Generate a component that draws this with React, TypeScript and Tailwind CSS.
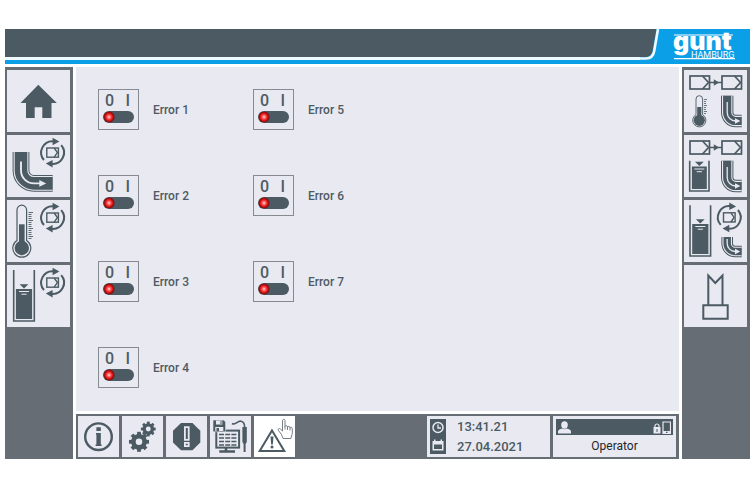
import type { ReactNode } from "react";

const DARK = "#4b5a63";
const LIGHT = "#e9e9f1";

const columns = [
  ["Error 1", "Error 2", "Error 3", "Error 4"],
  ["Error 5", "Error 6", "Error 7"],
];

/* ---------- icon parts, drawn in a 63 x 62 button ---------- */

function Carrier({ x, y, w, h, stroke = 1.7 }: { x: number; y: number; w: number; h: number; stroke?: number }) {
  const right = x + w;
  const notch = w * 0.36;
  return (
    <g fill="none" stroke={DARK} strokeWidth={stroke}>
      <rect x={x} y={y} width={w} height={h} />
      <path d={`M${right - notch} ${y}L${right - 1} ${y + h / 2}L${right - notch} ${y + h}`} />
    </g>
  );
}

function Cycle({ x, y }: { x: number; y: number }) {
  return (
    <g transform={`translate(${x} ${y})`}>
      <path d="M-8.6 7.4A11.3 11.3 0 0 1 1 -11.3M8.6 -7.4A11.3 11.3 0 0 1 -1 11.3" fill="none" stroke={DARK} strokeWidth="2" />
      <path d="M0 -14.8L6.8 -11L0 -7.4ZM0 14.8L-6.8 11L0 7.4Z" fill={DARK} />
      <Carrier x={-5.8} y={-4.6} w={11.6} h={9.2} stroke={1.4} />
    </g>
  );
}

function Pipe({ d, width, arrow, head }: { d: string; width: number; arrow: string; head: string }) {
  return (
    <g fill="none">
      <path d={d} stroke={DARK} strokeWidth={width} />
      <path d={d} stroke={LIGHT} strokeWidth={width - 2} />
      <path d={d} stroke={DARK} strokeWidth={width - 4.2} />
      <path d={arrow} stroke={LIGHT} strokeWidth={width > 14 ? 1.9 : 1.3} />
      <path d={head} fill={LIGHT} />
    </g>
  );
}

function SmallPipe() {
  return (
    <Pipe
      d="M43.2 25.7V42.5A8.5 8.5 0 0 0 51.7 51H57.7"
      width={12.4}
      arrow="M43.2 32V42.5A8.5 8.5 0 0 0 51.7 51"
      head="M51 48.2L56.4 51L51 53.8Z"
    />
  );
}

function Tank({ x, y, w, level }: { x: number; y: number; w: number; level: number }) {
  const mid = x + w / 2;
  return (
    <g>
      <path d={`M${x} ${y}V56H${x + w}V${y}`} fill="none" stroke={DARK} strokeWidth="1.6" />
      <rect x={x + 2.2} y={level} width={w - 4.4} height={54 - level} fill={DARK} />
      <path d={`M${mid - 4.4} ${level - 4.8}H${mid + 4.4}L${mid} ${level - 0.4}Z`} fill={DARK} />
      <path d={`M${mid - 5} ${level + 2.5}H${mid + 5}M${mid - 2.6} ${level + 5.2}H${mid + 2.6}`} stroke={LIGHT} />
    </g>
  );
}

function Transfer() {
  return (
    <g>
      <Carrier x={6} y={6} w={19.5} h={13} />
      <Carrier x={38} y={6} w={19.5} h={13} />
      <path d="M25.5 12.5H38" stroke={DARK} strokeWidth="1.5" />
      <path d="M29.8 9.2L35 12.5L29.8 15.8Z" fill={DARK} />
    </g>
  );
}

const leftNav: { label: string; icon: ReactNode }[] = [
  {
    label: "Home",
    icon: <path d="M31.3 14.8L49.8 33H44.5V48H35.3V37.3H27.7V48H19V33H13.5Z" fill={DARK} />,
  },
  {
    label: "Flow cycle",
    icon: (
      <g>
        <Pipe
          d="M14 17V35.4A13 13 0 0 0 27 48.4H45.7"
          width={16.8}
          arrow="M14 26.5V35.4A13 13 0 0 0 27 48.4H33"
          head="M32.3 45L39.2 48.4L32.3 51.8Z"
        />
        <Cycle x={45.6} y={17.6} />
      </g>
    ),
  },
  {
    label: "Temperature cycle",
    icon: (
      <g>
        <path d="M10 40.5V10A4.8 4.8 0 0 1 19.6 10V40.5A9 9 0 1 1 10 40.5Z" fill="none" stroke={DARK} strokeWidth="1.2" />
        <rect x="12" y="24.3" width="5.6" height="20" fill={DARK} />
        <circle cx="14.8" cy="48" r="7.2" fill={DARK} />
        <path
          d="M21.5 12.5H26M21.5 14.5H24.5M21.5 16.5H24.5M21.5 18.5H24.5M21.5 20.5H26M21.5 22.5H24.5M21.5 24.5H24.5M21.5 26.5H24.5M21.5 28.5H26M21.5 30.5H24.5M21.5 32.5H24.5M21.5 34.5H24.5M21.5 36.5H26M21.5 38.5H24.5"
          stroke={DARK}
          strokeWidth="0.9"
        />
        <Cycle x={45.6} y={17.6} />
      </g>
    ),
  },
  {
    label: "Level cycle",
    icon: (
      <g>
        <Tank x={6.7} y={5} w={20.6} level={24} />
        <Cycle x={45.6} y={17.6} />
      </g>
    ),
  },
];

const rightNav: { label: string; icon: ReactNode }[] = [
  {
    label: "Temperature and flow",
    icon: (
      <g>
        <Transfer />
        <path d="M12 44.6V29A3.3 3.3 0 0 1 18.6 29V44.6A6.6 6.6 0 1 1 12 44.6Z" fill="none" stroke={DARK} strokeWidth="0.9" />
        <rect x="13.2" y="37" width="4.2" height="10" fill={DARK} />
        <circle cx="15.3" cy="50.3" r="5.6" fill={DARK} />
        <path d="M20 29.5H23M20 31.5H22M20 33.5H22M20 35.5H23M20 37.5H22M20 39.5H22M20 41.5H23M20 43.5H22" stroke={DARK} strokeWidth="0.8" />
        <SmallPipe />
      </g>
    ),
  },
  {
    label: "Level and flow",
    icon: (
      <g>
        <Transfer />
        <Tank x={5.7} y={25.7} w={19.3} level={31.5} />
        <SmallPipe />
      </g>
    ),
  },
  {
    label: "Level cascade",
    icon: (
      <g>
        <Tank x={6} y={5.3} w={20.6} level={24} />
        <Cycle x={45.3} y={17.4} />
        <Pipe
          d="M43.2 37V43.5A8 8 0 0 0 51.2 51.5H57.7"
          width={11.6}
          arrow="M43.2 39V43.5A8 8 0 0 0 51.2 51.5"
          head="M51 48.8L56.2 51.5L51 54.2Z"
        />
      </g>
    ),
  },
  {
    label: "Valve",
    icon: (
      <path d="M24.3 39.7V10.5L31.3 18L38.5 10.5V39.7M19.3 40.3H43.7V53.7H19.3Z" fill="none" stroke={DARK} strokeWidth="2" />
    ),
  },
];

/* ---------- tool bar icons, drawn in a 41 x 41 button ---------- */

function Gear({ x, y, r }: { x: number; y: number; r: number }) {
  return (
    <g transform={`translate(${x} ${y})`}>
      <circle r={r * 0.56} fill="none" stroke={DARK} strokeWidth={r * 0.46} />
      {[0, 45, 90, 135, 180, 225, 270, 315].map(a => (
        <rect key={a} x={-r * 0.19} y={-r} width={r * 0.38} height={r * 0.36} fill={DARK} transform={`rotate(${a})`} />
      ))}
    </g>
  );
}

const tools: { label: string; icon: ReactNode }[] = [
  {
    label: "Information",
    icon: (
      <g>
        <circle cx="20.5" cy="20.7" r="13.3" fill="none" stroke={DARK} strokeWidth="2.4" />
        <path d="M18.4 11.3H22.8V15H18.4ZM18 17H22.8V28.6H23.6V30H17.6V28.6H18.4V18.4H18Z" fill={DARK} />
      </g>
    ),
  },
  {
    label: "Settings",
    icon: (
      <g>
        <Gear x={17} y={25.8} r={10} />
        <Gear x={26.3} y={13} r={7.4} />
      </g>
    ),
  },
  {
    label: "Alarms",
    icon: (
      <g>
        <path d="M15 7H26.5L34.3 14.8V26.4L26.5 34.3H15L7 26.4V14.8Z" fill={DARK} />
        <path d="M18.9 11.2H22.7V23.8H18.9ZM18.9 26.8H22.7V30.2H18.9Z" fill={DARK} stroke={LIGHT} strokeWidth="1.8" />
      </g>
    ),
  },
  {
    label: "Data recording",
    icon: (
      <g>
        <rect x="6.3" y="14.6" width="22.8" height="17" fill="none" stroke={DARK} strokeWidth="2" />
        <path d="M16 31V35M9.3 35.5H25" stroke={DARK} strokeWidth="2.6" />
        <path d="M9 18.5H26.5M9 22H26.5M9 25.5H26.5M9 29H26.5" stroke={DARK} strokeWidth="1.6" strokeDasharray="5 1.2" />
        <path d="M3 4H13.6L15.6 6V15.8H3Z" fill={DARK} stroke={LIGHT} strokeWidth="0.6" />
        <path d="M6 4.5H12.3V8.6H6ZM5.3 11H13.3V15H5.3Z" fill={LIGHT} />
        <path d="M10.5 5H11.5V8H10.5ZM6.5 12H9V15H6.5Z" fill={DARK} />
        <path d="M22 7.5C26 10 27 4.5 31 5.2C34 5.7 34.6 8 34.6 11" fill="none" stroke={DARK} strokeWidth="1.6" />
        <path d="M32.4 11H36.8V26L35.6 28V36H33.6V28L32.4 26Z" fill={DARK} />
      </g>
    ),
  },
  {
    label: "Simulated errors",
    icon: (
      <g>
        <path d="M18 14.5L30.3 35H5.7Z" fill="none" stroke={DARK} strokeWidth="2" />
        <path d="M16.5 20.5H19.5L18.8 28.5H17.2Z" fill={DARK} />
        <circle cx="18" cy="31" r="1.5" fill={DARK} />
        <path
          d="M29 22.5L27.5 18.5L24.3 14.2C23.6 12.8 25.3 12 26.3 13L28.5 15V4.8C28.5 2.8 31 2.8 31 4.8V10.5C31.5 9 33.5 9.500 33.5 11C34 9.8 36 10.3 36 11.8C36.5 10.8 38.3 11.2 38.3 12.8V17.5L36.8 22.5ZM31 10.5V13.5M33.5 11V14M36 11.8V14.5"
          fill="#fff"
          stroke="#555e66"
          strokeWidth="0.8"
        />
      </g>
    ),
  },
];

function SideNav({ label, items }: { label: string; items: { label: string; icon: ReactNode }[] }) {
  return (
    <nav aria-label={label} className="flex w-[68px] shrink-0 flex-col gap-[3px] bg-[#676d74] pt-[3px] pr-[3px] pl-[2px]">
      {items.map(item => (
        <button key={item.label} type="button" aria-label={item.label} className="h-[62px] w-full bg-[#e9e9f1]">
          <svg viewBox="0 0 63 62" className="h-full w-full">{item.icon}</svg>
        </button>
      ))}
    </nav>
  );
}

function ErrorSwitch({ label }: { label: string }) {
  return (
    <label className="flex items-center gap-[14px] text-xs font-medium text-[#4f5b64]">
      <span className="flex h-[41px] w-[41px] flex-col items-center border border-[#858b91] pt-[1px]">
        <span aria-hidden="true" className="flex w-full justify-between pr-[8px] pl-[6px] text-base leading-5">
          <span>0</span>
          <span>I</span>
        </span>
        <input
          type="checkbox"
          role="switch"
          className="h-[12px] w-[31px] appearance-none rounded-full bg-[#4b5a63] bg-[radial-gradient(circle_at_6px_6px,#ffdcdc_0px,#ff5050_2px,#d00808_4px,#7c1418_5px,transparent_6px)]"
        />
      </span>
      {label}
    </label>
  );
}

function Header() {
  return (
    <header className="flex h-[35px] bg-[#0a9fe6] text-white">
      <div className="h-[31px] flex-1 border-b-[3px] border-[#eefaff] bg-[#4b5a63]" />
      <svg viewBox="0 0 20 31" className="h-[31px] w-[20px] shrink-0">
        <path d="M0 0H16.5L12.5 22Q11.5 28 5 28H0Z" fill={DARK} />
        <path d="M0 29.5H6Q13 29.3 14.2 22L18 0" fill="none" stroke="#eefaff" strokeWidth="2.6" />
      </svg>
      <svg viewBox="0 0 90 35" role="img" aria-label="gunt Hamburg" className="h-[35px] w-[90px] shrink-0 overflow-visible" fill="#fff">
        <path d="M14 6H73" stroke="#fff" strokeWidth="1.2" />
        <text x="13" y="21" fontSize="25" fontWeight="900" fontFamily="Inter, sans-serif">gunt</text>
        <path d="M14 29.7H75" stroke="#fff" strokeWidth="1.2" />
        <text x="31" y="28.5" fontSize="9" fontFamily="Roboto, sans-serif">HAMBURG</text>
      </svg>
    </header>
  );
}

function StatusPanels() {
  return (
    <div className="ml-auto flex gap-[3px]">
      <div className="flex w-[123px] items-center gap-[11px] bg-[#e9e9f1] pl-[3px] text-[13px] font-medium text-[#4b5a63]">
        <svg viewBox="0 0 16 35" className="h-[35px] w-[16px]">
          <rect width="16" height="35" fill={DARK} />
          <circle cx="8" cy="8.5" r="5" fill="none" stroke={LIGHT} strokeWidth="1.5" />
          <path d="M8 5.5V9H11" fill="none" stroke={LIGHT} strokeWidth="1.3" />
          <path d="M2.5 22H4V20.5H5.5V22H10.5V20.5H12V22H13.5V31.5H2.5Z" fill={LIGHT} />
          <path d="M4 25.5H12V30H4Z" fill={DARK} />
        </svg>
        <div className="leading-5">
          <div>13:41.21</div>
          <div>27.04.2021</div>
        </div>
      </div>
      <div className="flex w-[123px] flex-col bg-[#e9e9f1] px-[3px] pt-[3px]">
        <div className="flex h-[16px] items-center justify-between bg-[#4b5a63] px-[2px]">
          <svg viewBox="0 0 13 13" className="h-[13px] w-[13px]" fill={LIGHT}>
            <ellipse cx="6.5" cy="4" rx="3.3" ry="3.7" />
            <path d="M0 12.500V10.500Q0 8.500 4.500 7.500Q6.500 9 8.500 7.500Q13 8.500 13 10.500V12.500Z" />
          </svg>
          <svg viewBox="0 0 18 13" className="h-[13px] w-[18px]">
            <path d="M0.5 6H7.5V12.5H0.5Z" fill={LIGHT} />
            <path d="M2 6.5V5A2 2 0 0 1 6 5V6.5" fill="none" stroke={LIGHT} strokeWidth="1.2" />
            <path d="M3.5 8H4.5V11H3.5Z" fill={DARK} />
            <path d="M10 1H17.5V12.5H10Z" fill="none" stroke={LIGHT} strokeWidth="1.2" />
            <path d="M10 10H17.5V12.5H10Z" fill={LIGHT} />
            <path d="M13 10.8H14.5V12H13Z" fill={DARK} />
          </svg>
        </div>
        <div className="flex flex-1 items-center justify-center text-xs text-[#20262b]">Operator</div>
      </div>
    </div>
  );
}

export default function App() {
  return (
    <div className="flex min-h-screen flex-col gap-[3px] bg-white px-[5px] py-[29px] font-[Roboto,sans-serif]">
      <Header />
      <div className="flex flex-1 gap-[3px]">
        <SideNav label="Control loops" items={leftNav} />
        <div className="flex min-w-0 flex-1 flex-col gap-[3px]">
          <main className="flex flex-1 bg-[#e9e9f1] pt-[22px] pl-[22px]">
            {columns.map(column => (
              <div key={column[0]} className="flex w-[155px] flex-col gap-[45px]">
                {column.map(name => <ErrorSwitch key={name} label={name} />)}
              </div>
            ))}
          </main>
          <footer className="flex h-[45px] bg-[#676d74] pt-[2px] pr-[3px] pb-[2px] pl-[2px]">
            <nav aria-label="Tools" className="flex gap-[3px]">
              {tools.map(tool => (
                <button key={tool.label} type="button" aria-label={tool.label} className="h-[41px] w-[41px] bg-[#e9e9f1] last:bg-white">
                  <svg viewBox="0 0 41 41" className="h-full w-full">{tool.icon}</svg>
                </button>
              ))}
            </nav>
            <StatusPanels />
          </footer>
        </div>
        <SideNav label="Cascades" items={rightNav} />
      </div>
    </div>
  );
}
